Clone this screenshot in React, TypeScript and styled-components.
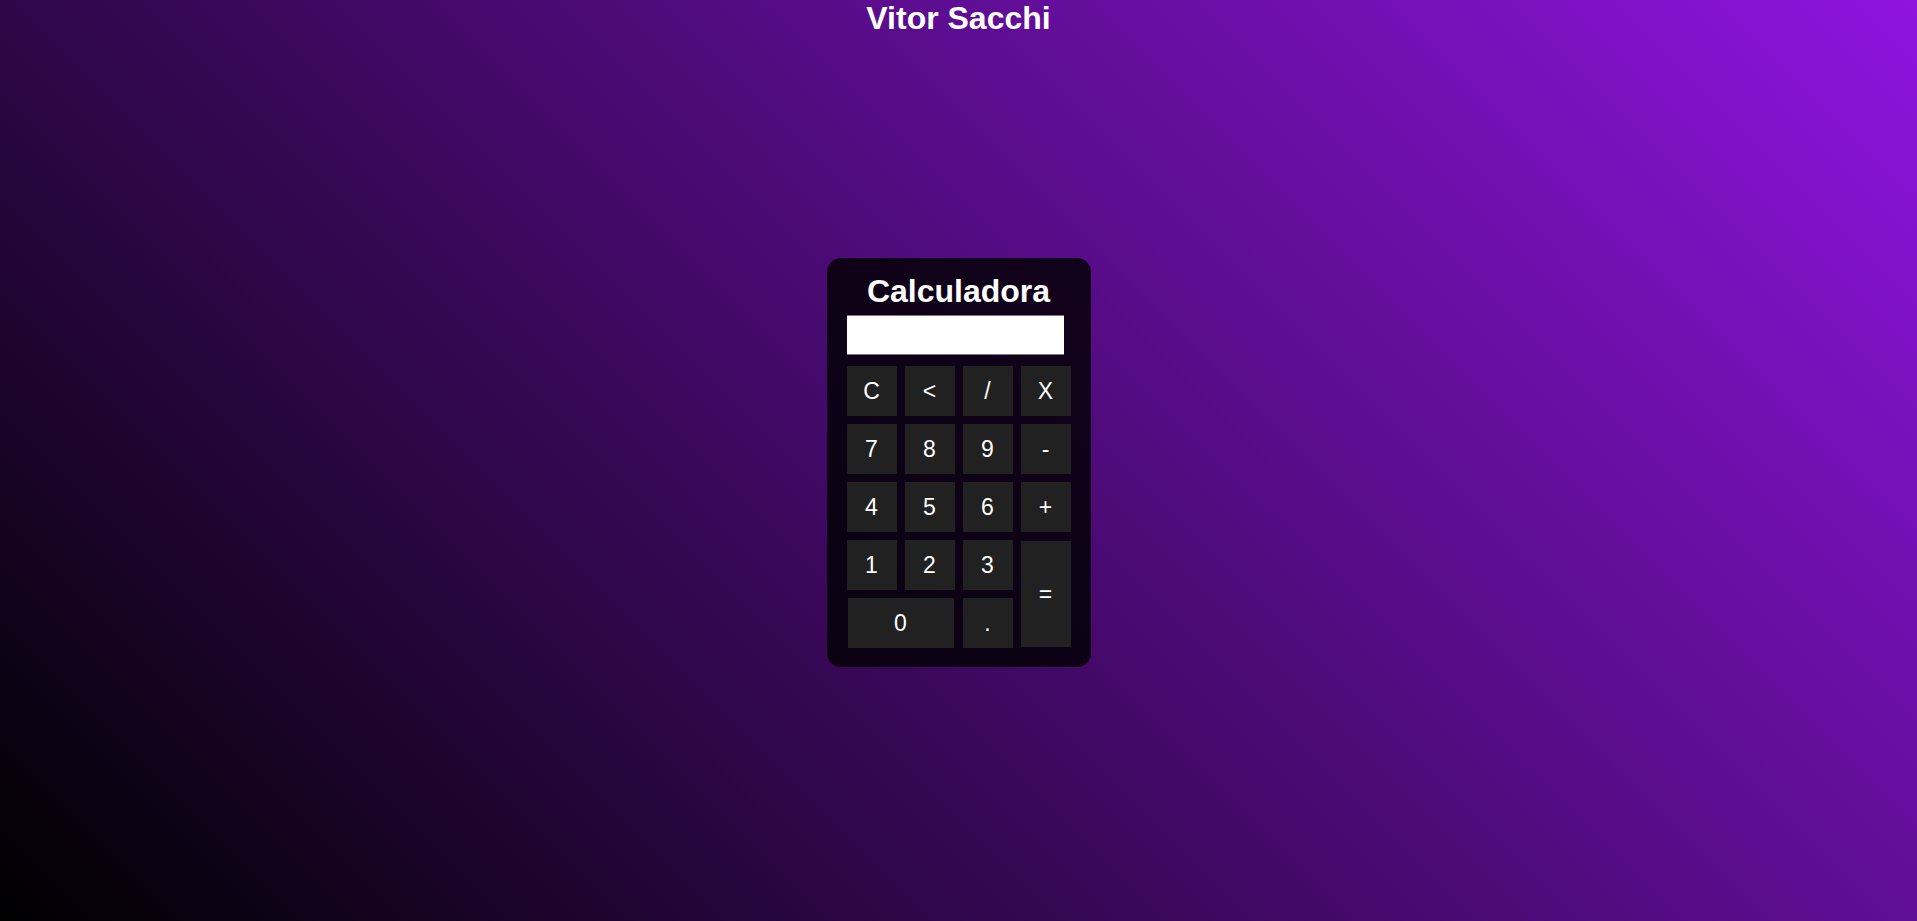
import React from "react";
import styled, { createGlobalStyle } from "styled-components";

const GlobalStyle = createGlobalStyle`
  html, body {
    margin: 0;
    padding: 0;
  }
  body {
    font-family: "Liberation Sans", Arial, sans-serif;
    background: linear-gradient(45deg, #000000, #8f14df);
    min-height: 100vh;
  }
`;

const Page = styled.div`
  min-height: 100vh;
  display: grid;
  grid-template-rows: 37px 1fr 33px;
`;

const Header = styled.h1`
  margin: 0;
  color: #ffffff;
  font-size: 32px;
  font-weight: bold;
  text-align: center;
  line-height: normal;
`;

const Main = styled.main`
  display: flex;
  align-items: center;
  justify-content: center;
`;

const Card = styled.div`
  background: rgba(0, 0, 0, 0.8);
  border-radius: 14px;
  padding: 15px 20px 19px;
  display: flex;
  flex-direction: column;
`;

const Title = styled.h2`
  margin: 0 0 5px;
  color: #ffffff;
  font-size: 32px;
  font-weight: bold;
  text-align: center;
  line-height: normal;
`;

const Display = styled.input`
  width: 217px;
  height: 40px;
  box-sizing: border-box;
  background: #ffffff;
  border: none;
  border-top: 1px solid #7d7286;
  border-bottom: 1px solid #7d7286;
  margin: 0 0 11px;
  padding: 0 6px;
  font-family: "Liberation Sans", Arial, sans-serif;
  font-size: 20px;
  outline: none;
`;

const Keys = styled.div`
  display: grid;
  grid-template-columns: repeat(4, 50px);
  grid-auto-rows: 50px;
  gap: 8px;
`;

const Key = styled.button<{ $wide?: boolean; $tall?: boolean }>`
  background: #212121;
  color: #ffffff;
  border: none;
  padding: 0;
  font-family: "Liberation Sans", Arial, sans-serif;
  font-size: 23px;
  cursor: pointer;
  grid-column: ${(p) => (p.$wide ? "span 2" : "auto")};
  grid-row: ${(p) => (p.$tall ? "span 2" : "auto")};
  margin: ${(p) => (p.$wide ? "0 1px" : p.$tall ? "1px 0" : "0")};
  display: flex;
  align-items: center;
  justify-content: center;
`;

const keys: { label: string; wide?: boolean; tall?: boolean }[] = [
  { label: "C" },
  { label: "<" },
  { label: "/" },
  { label: "X" },
  { label: "7" },
  { label: "8" },
  { label: "9" },
  { label: "-" },
  { label: "4" },
  { label: "5" },
  { label: "6" },
  { label: "+" },
  { label: "1" },
  { label: "2" },
  { label: "3" },
  { label: "=", tall: true },
  { label: "0", wide: true },
  { label: "." },
];

export default function App() {
  return (
    <>
      <GlobalStyle />
      <Page>
        <Header>Vitor Sacchi</Header>
        <Main>
          <Card>
            <Title>Calculadora</Title>
            <Display type="text" readOnly />
            <Keys>
              {keys.map((k) => (
                <Key key={k.label} $wide={k.wide} $tall={k.tall}>
                  {k.label}
                </Key>
              ))}
            </Keys>
          </Card>
        </Main>
        <div />
      </Page>
    </>
  );
}
